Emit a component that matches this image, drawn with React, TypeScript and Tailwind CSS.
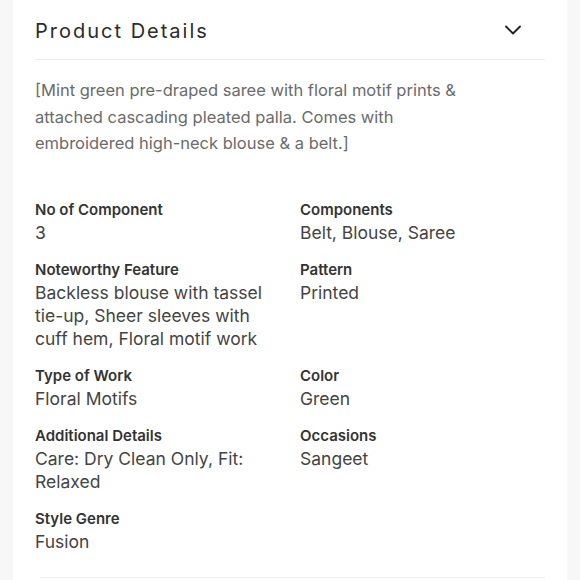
import { ChevronDown } from 'lucide-react';

const details = [
  { label: 'No of Component', value: '3' },
  { label: 'Components', value: 'Belt, Blouse, Saree' },
  {
    label: 'Noteworthy Feature',
    value: 'Backless blouse with tassel tie-up, Sheer sleeves with cuff hem, Floral motif work',
  },
  { label: 'Pattern', value: 'Printed' },
  { label: 'Type of Work', value: 'Floral Motifs' },
  { label: 'Color', value: 'Green' },
  { label: 'Additional Details', value: 'Care: Dry Clean Only, Fit: Relaxed' },
  { label: 'Occasions', value: 'Sangeet' },
  { label: 'Style Genre', value: 'Fusion' },
];

const App = () => {
  return (
    <div
      className="min-h-[580px] bg-[#f7f7f7] px-[13px]"
      style={{ fontFamily: 'Inter, "Noto Sans", sans-serif' }}
    >
      <div className="min-h-[580px] bg-white px-[22px]">
        {/* Header */}
        <div className="flex items-center justify-between h-[60px] border-b border-[#eeeeee]">
          <h2 className="text-[20px] tracking-[0.1em] text-[#2b2b2b] pt-[2px]">
            Product Details
          </h2>
          <ChevronDown className="w-7 h-7 mr-[18px] text-[#222]" strokeWidth={1.6} />
        </div>

        {/* Description */}
        <p className="pt-[17px] text-[16.5px] leading-[26.5px] text-[#6b6b6b] pr-[60px]">
          [Mint green pre-draped saree with floral motif prints &amp; attached cascading pleated
          palla. Comes with embroidered high-neck blouse &amp; a belt.]
        </p>

        {/* Specs */}
        <div className="grid grid-cols-[265px_1fr] gap-y-[15px] pt-[42px] pb-[24px]">
          {details.map((d) => (
            <div key={d.label} className="pr-[22px]">
              <div className="text-[15px] font-semibold text-[#333] leading-[22px]">
                {d.label}
              </div>
              <div className="text-[17.5px] text-[#444] leading-[23px]">{d.value}</div>
            </div>
          ))}
        </div>
        <div className="border-b border-[#eeeeee] ml-[5px]" />
      </div>
    </div>
  );
};

export default App;
